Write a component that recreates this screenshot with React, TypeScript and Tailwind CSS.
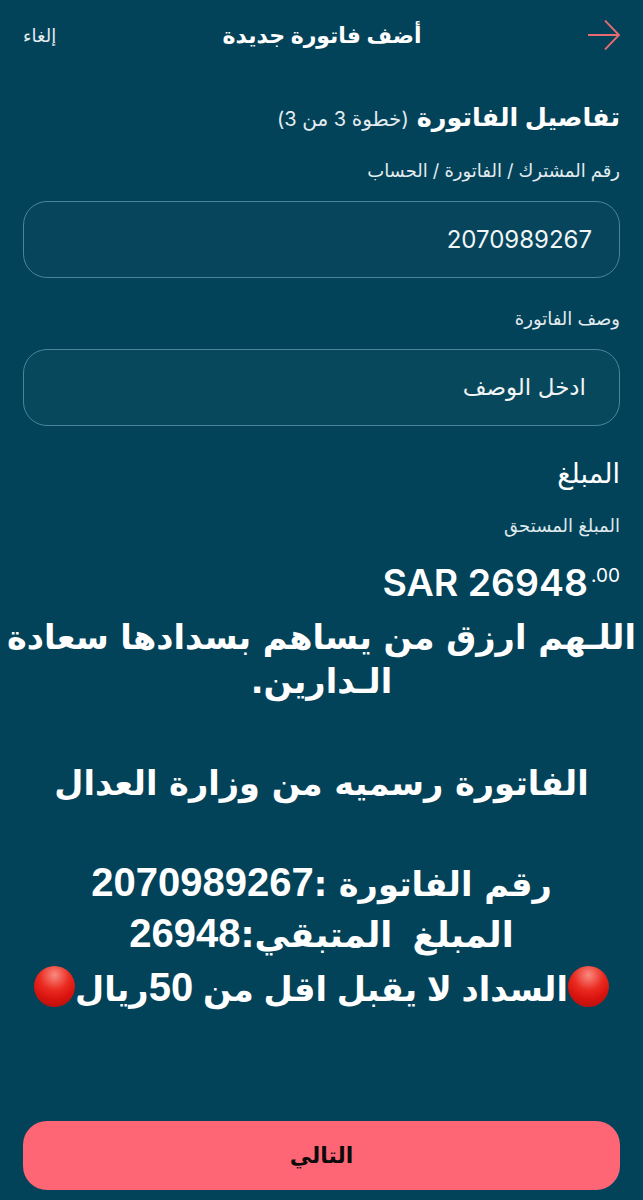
import React from 'react';

const RedDot = () => (
    <span className="inline-block align-[-6px] w-[41px] h-[41px] rounded-full bg-[radial-gradient(circle_at_50%_22%,#f98a80_0%,#ea2a20_40%,#d8130e_65%,#a01210_100%)]" />
);

const Num = ({ children }: { children: React.ReactNode }) => (
    <span className="text-[40px]" style={{ fontFamily: '"Liberation Sans", sans-serif' }}>{children}</span>
);

const Field = ({ label, value, inset, tint, size }: { label: string; value: string; inset: string; tint: string; size: string }) => (
    <div>
        <div className="text-[18px] leading-[24px] text-[#e4ecef]">{label}</div>
        <div className={`mt-[18px] h-[77px] flex items-center rounded-[24px] border-[1.5px] border-[#4a8599] ${inset} ${tint} ${size} text-[#f1f5f6]`}>
            {value}
        </div>
    </div>
);

export default function App() {
    return (
        <div dir="rtl" className="w-[643px] h-[1200px] overflow-hidden bg-[#03435a] text-white flex flex-col" style={{ fontFamily: 'Inter, "DejaVu Sans", sans-serif' }}>
            {/* Header */}
            <div className="h-[70px] flex items-center justify-between px-[23px]">
                <svg width="32" height="30" viewBox="0 0 32 30" fill="none" stroke="#ea6a72" strokeWidth="1.8" className="shrink-0">
                    <path d="M0 15H31M17 0.5l14 14.5-14 14.5" />
                </svg>
                <div className="text-[22px] font-semibold">أضف فاتورة جديدة</div>
                <div className="text-[18px] text-[#e4ecef]">إلغاء</div>
            </div>

            <div className="px-[23px]">
                <div className="mt-[22px] flex items-baseline gap-[8px]">
                    <span className="text-[25.5px] leading-[50px] font-semibold">تفاصيل الفاتورة</span>
                    <span className="text-[20px] text-[#e4ecef]">(خطوة 3 من 3)</span>
                </div>

                <div className="mt-[17px]">
                    <Field label="رقم المشترك / الفاتورة / الحساب" value="2070989267" inset="pr-[27px]" tint="bg-[#06455b]" size="text-[24px]" />
                </div>
                <div className="mt-[29px]">
                    <Field label="وصف الفاتورة" value="ادخل الوصف" inset="pr-[33px]" tint="bg-[#08485d]" size="text-[23px]" />
                </div>

                <div className="mt-[31px] text-[27px] leading-[34px]">المبلغ</div>
                <div className="mt-[23px] text-[18px] leading-[24px] text-[#dfe8eb]">المبلغ المستحق</div>
                <div dir="ltr" className="mt-[23px] text-right text-[37.5px] leading-[44px] font-semibold">
                    SAR 26948<sup className="text-[19px] font-normal align-[5px] ml-[3px]">.00</sup>
                </div>
            </div>

            {/* Pasted message */}
            <div className="mt-[11px] text-center font-bold text-[33.6px] whitespace-nowrap" style={{ fontFamily: '"DejaVu Sans", sans-serif' }}>
                <div className="h-[44px] leading-[44px]">اللـهم ارزق من يساهم بسدادها سعادة</div>
                <div className="h-[44px] leading-[44px]">الـدارين.</div>
                <div className="mt-[55px] h-[50px] leading-[50px]">الفاتورة رسميه من وزارة العدال</div>
                <div className="mt-[48px] h-[50px] leading-[50px]">رقم الفاتورة :<Num>2070989267</Num></div>
                <div className="mt-[1px] h-[50px] leading-[50px] text-[35px] [word-spacing:8px]">المبلغ المتبقي:<Num>26948</Num></div>
                <div className="mt-[4px] h-[50px] leading-[50px] [word-spacing:-2px]">
                    <RedDot />السداد لا يقبل اقل من <Num>50</Num>ريال<RedDot />
                </div>
            </div>

            <div className="flex-1" />

            {/* Next button */}
            <div className="px-[23px] pb-[10px]">
                <div className="h-[69px] rounded-[24px] bg-[#ff6675] flex items-center justify-center text-[22px] font-semibold text-[#0b0b0b]">
                    التالي
                </div>
            </div>
        </div>
    );
}
